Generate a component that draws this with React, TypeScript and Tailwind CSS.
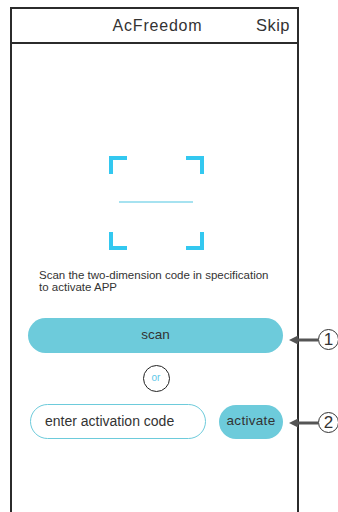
export default function App() {
  return (
    <div className="relative h-[512px] w-[338px] overflow-hidden bg-white font-['Liberation_Sans',Arial,sans-serif] text-[#333]">
      <div className="relative ml-[10px] mt-[7px] h-[520px] w-[289px] border-2 border-b-0 border-[#2b2b2b]">
        <header className="grid h-[35px] grid-cols-[1fr_auto_1fr] items-center border-b-2 border-[#2b2b2b]">
          <span />
          <h1 className="pl-[6px] text-[16px] leading-none tracking-[0.8px]">AcFreedom</h1>
          <span className="pr-[7px] text-right text-[16.5px] leading-none tracking-[0.5px]">Skip</span>
        </header>

        <div className="flex justify-center pl-[3px] pt-[112px]">
          <div className="relative h-[94px] w-[95px]">
            <span className="absolute left-0 top-0 h-[18px] w-[18px] border-l-4 border-t-4 border-[#33c8f0]" />
            <span className="absolute right-0 top-0 h-[18px] w-[18px] border-r-4 border-t-4 border-[#33c8f0]" />
            <span className="absolute bottom-0 left-0 h-[18px] w-[18px] border-b-4 border-l-4 border-[#33c8f0]" />
            <span className="absolute bottom-0 right-0 h-[18px] w-[18px] border-b-4 border-r-4 border-[#33c8f0]" />
            <span className="absolute left-[10px] top-[45px] h-[2px] w-[74px] bg-[#a6e2f0]" />
          </div>
        </div>

        <p className="mt-[19px] pl-[27px] pr-[4px] text-[11.5px] leading-[12px] text-[#333]">
          Scan the two-dimension code in specification
          <br />
          to activate APP
        </p>

        <div className="mt-[25px] px-[16px]">
          <button
            type="button"
            className="flex h-[35px] w-[255px] items-center justify-center rounded-full bg-[#6dcbdb] text-[13.5px] text-[#333]"
          >
            scan
          </button>
        </div>

        <div className="mt-[12px] flex justify-center pl-[3px]">
          <span className="flex h-[27px] w-[27px] items-center justify-center rounded-full border-[1.5px] border-[#222] pb-[2px] text-[10px] text-[#5fc8e8]">
            or
          </span>
        </div>

        <div className="mt-[12px] flex items-center gap-[13px] pl-[18px]">
          <div className="flex h-[35px] w-[176px] items-center rounded-full border-[1.5px] border-[#6dcbdb] pl-[14px] text-[14px] text-[#333]">
            enter activation code
          </div>
          <button
            type="button"
            className="flex h-[34px] w-[64px] items-center justify-center rounded-full bg-[#6dcbdb] text-[13.5px] tracking-[0.3px] text-[#333]"
          >
            activate
          </button>
        </div>
      </div>

      <Callout top={329} n="1" />
      <Callout top={412} n="2" />
    </div>
  );
}

function Callout({ top, n }: { top: number; n: string }) {
  return (
    <div className="absolute left-[289px] flex items-center" style={{ top }}>
      <svg width="29" height="12" viewBox="0 0 29 12">
        <polygon points="0,6 9,1.5 9,10.5" fill="#555" />
        <line x1="8" y1="6" x2="29" y2="6" stroke="#555" strokeWidth="3" />
      </svg>
      <span className="flex h-[21px] w-[21px] shrink-0 items-center justify-center rounded-full border-[1.5px] border-[#333] text-[17px] leading-none text-[#333]">
        {n}
      </span>
    </div>
  );
}
